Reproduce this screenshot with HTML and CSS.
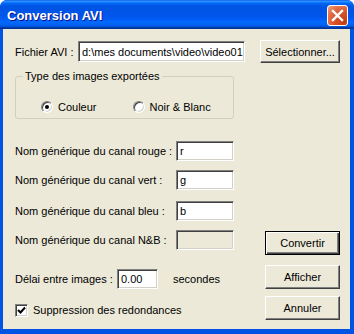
FILE: index.html
```html
<!DOCTYPE html>
<html lang="fr">
<head>
<meta charset="utf-8">
<title>Conversion AVI</title>
<link rel="stylesheet" href="styles.css">
</head>
<body>
<div class="window">
  <div class="titlebar">
    <span class="title">Conversion AVI</span>
    <span class="close">
      <svg width="13" height="13" viewBox="0 0 13 13"><path d="M2 2 L11 11 M11 2 L2 11" stroke="#fff" stroke-width="2.4" stroke-linecap="square"/></svg>
    </span>
  </div>
  <div class="client">
    <div class="row row-file">
      <span class="lbl lbl-file">Fichier AVI :</span>
      <span class="edit edit-file">d:\mes documents\video\video01</span>
      <span class="btn btn-select">Sélectionner...</span>
    </div>
    <fieldset class="group">
      <legend>Type des images exportées</legend>
      <div class="radios">
        <span class="radio checked"></span><span class="rlbl">Couleur</span>
        <span class="radio radio2"></span><span class="rlbl">Noir &amp; Blanc</span>
      </div>
    </fieldset>
    <div class="row row-ch r1">
      <span class="lbl lbl-ch">Nom générique du canal rouge :</span>
      <span class="edit edit-ch">r</span>
    </div>
    <div class="row row-ch r2">
      <span class="lbl lbl-ch">Nom générique du canal vert :</span>
      <span class="edit edit-ch">g</span>
    </div>
    <div class="row row-ch r3">
      <span class="lbl lbl-ch">Nom générique du canal bleu :</span>
      <span class="edit edit-ch">b</span>
    </div>
    <div class="row row-ch r4">
      <span class="lbl lbl-ch">Nom générique du canal N&amp;B :</span>
      <span class="edit edit-ch disabled"></span>
      <span class="btn btn-def">Convertir</span>
    </div>
    <div class="row row-delai">
      <span class="lbl lbl-delai">Délai entre images :</span>
      <span class="edit edit-delai">0.00</span>
      <span class="lbl lbl-sec">secondes</span>
      <span class="btn btn-std">Afficher</span>
    </div>
    <div class="row row-chk">
      <span class="check">
        <svg width="9" height="9" viewBox="0 0 9 9"><path d="M1 4 L3.5 6.5 L8 1.5" fill="none" stroke="#000" stroke-width="2"/></svg>
      </span>
      <span class="lbl lbl-chk">Suppression des redondances</span>
      <span class="btn btn-std">Annuler</span>
    </div>
  </div>
</div>
</body>
</html>
```
FILE: styles.css
```css
* { box-sizing: border-box; }
html, body { margin: 0; padding: 0; background: #fff; }
body {
  font-family: "Liberation Sans", Arial, sans-serif;
  font-size: 11px;
  color: #000;
}
.window {
  width: 354px;
  height: 334px;
  display: flex;
  flex-direction: column;
  background: #0054e3;
  border-radius: 7px 7px 0 0;
  overflow: hidden;
}
.titlebar {
  height: 29px;
  flex: none;
  display: flex;
  align-items: center;
  justify-content: space-between;
  padding: 0 6px 0 7px;
  background: linear-gradient(to bottom, #0058ee 0%, #3593ff 4%, #288eff 6%, #127dff 8%, #036ffc 10%, #0262ee 14%, #0057e5 20%, #0054e3 24%, #0055eb 56%, #005bf5 66%, #026afe 76%, #0062ef 86%, #0052d6 92%, #0040ab 94%, #003092 100%);
}
.title {
  color: #fff;
  font-weight: bold;
  font-size: 13px;
  text-shadow: 1px 1px #0f1089;
  margin-top: 1px;
}
.close {
  width: 21px;
  height: 21px;
  border: 1px solid #fff;
  border-radius: 3px;
  background: radial-gradient(circle at 85% 85%, #c23d12 0%, #d9542a 45%, #e5764f 75%, #f0a88a 100%);
  display: flex;
  align-items: center;
  justify-content: center;
  margin-top: 1px;
}
.client {
  flex: 1;
  margin: 0 4px 5px 3px;
  background: #ece9d8;
  padding: 11px 10px 0 12px;
  display: flex;
  flex-direction: column;
}
.row { display: flex; align-items: center; }
.lbl { white-space: nowrap; }
.edit {
  display: flex;
  align-items: center;
  background: #fff;
  border-top: 1px solid #808080;
  border-left: 1px solid #808080;
  border-right: 1px solid #fff;
  border-bottom: 1px solid #fff;
  box-shadow: inset 1px 1px #404040, inset -1px -1px #d4d0c8;
  padding: 0 3px;
  white-space: nowrap;
  overflow: hidden;
}
.edit.disabled { background: #ece9d8; }
.btn {
  display: flex;
  align-items: center;
  justify-content: center;
  background: #ece9d8;
  border-top: 1px solid #fff;
  border-left: 1px solid #fff;
  border-right: 1px solid #404040;
  border-bottom: 1px solid #404040;
  box-shadow: inset -1px -1px #808080;
  height: 23px;
}
.row-file { height: 23px; }
.lbl-file { width: 63px; }
.edit-file { width: 167px; height: 21px; }
.btn-select { width: 80px; margin-left: auto; }
.group {
  margin: 7px 0 0 0;
  width: 219px;
  height: 49px;
  border: 1px solid #d0d0bf;
  border-radius: 3px;
  padding: 0;
}
.group legend {
  padding: 0 2px;
  margin-left: 7px;
  line-height: 13px;
}
.radios {
  display: flex;
  align-items: center;
  padding: 18px 0 0 25px;
}
.radio {
  width: 12px;
  height: 12px;
  border-radius: 50%;
  background: #fff;
  border: 1px solid;
  border-color: #808080 #fff #fff #808080;
  box-shadow: inset 1px 1px #404040, inset -1px -1px #d4d0c8;
  display: flex;
  align-items: center;
  justify-content: center;
}
.radio.checked::after {
  content: "";
  width: 4px;
  height: 4px;
  border-radius: 50%;
  background: #000;
}
.rlbl { margin-left: 5px; }
.radio2 { margin-left: 36px; }
.row-ch { align-items: flex-start; }
.lbl-ch { width: 161px; line-height: 20px; }
.edit-ch { width: 58px; height: 20px; }
.r1 { margin-top: 22px; }
.r2 { margin-top: 9px; }
.r3 { margin-top: 11px; }
.r4 { margin-top: 9px; }
.btn-def {
  width: 75px;
  height: 24px;
  margin-left: auto;
  margin-top: 1px;
  border: 1px solid #000;
  box-shadow: inset 1px 1px #fff, inset -1px -1px #404040, inset -2px -2px #808080;
}
.row-delai { margin-top: 10px; align-items: flex-end; height: 24px; }
.lbl-delai { width: 102px; line-height: 20px; }
.edit-delai { width: 41px; height: 20px; }
.lbl-sec { margin-left: 15px; line-height: 20px; }
.btn-std { width: 75px; height: 24px; margin-left: auto; }
.row-chk { margin-top: 7px; height: 24px; }
.check {
  width: 13px;
  height: 13px;
  background: #fff;
  border: 1px solid;
  border-color: #808080 #fff #fff #808080;
  box-shadow: inset 1px 1px #404040, inset -1px -1px #d4d0c8;
  display: flex;
  align-items: center;
  justify-content: center;
  margin-top: 4px;
}
.lbl-chk { margin-left: 5px; margin-top: 4px; }
```
